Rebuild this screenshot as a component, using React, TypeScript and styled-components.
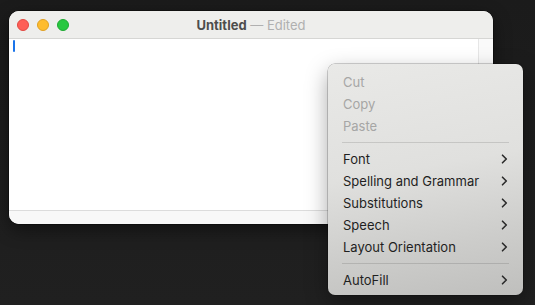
import React from 'react';
import styled, {createGlobalStyle} from 'styled-components';

const GlobalStyle = createGlobalStyle`
  html, body {
    margin: 0;
    padding: 0;
    background: #1d1d1d;
  }
  body {
    font-family: Inter, "Noto Sans", "Liberation Sans", sans-serif;
    -webkit-font-smoothing: antialiased;
  }
`;

type MenuEntry = { label: string, disabled?: boolean, submenu?: boolean } | 'sep'

const entries: MenuEntry[] = [
    {label: 'Cut', disabled: true},
    {label: 'Copy', disabled: true},
    {label: 'Paste', disabled: true},
    'sep',
    {label: 'Font', submenu: true},
    {label: 'Spelling and Grammar', submenu: true},
    {label: 'Substitutions', submenu: true},
    {label: 'Speech', submenu: true},
    {label: 'Layout Orientation', submenu: true},
    'sep',
    {label: 'AutoFill', submenu: true},
]

const Chevron = () => (
    <svg width="7" height="10" viewBox="0 0 7 10">
        <path d="M1.5 1.2 L5.3 5 L1.5 8.8" fill="none" stroke="#2a2a2a" strokeWidth="1.6"
              strokeLinecap="round" strokeLinejoin="round"/>
    </svg>
)

const App = () => {
    return (
        <Desktop>
            <GlobalStyle/>
            <Window>
                <TitleBar>
                    <Lights>
                        <Light color="#fe5f57" border="#e14942"/>
                        <Light color="#febc2e" border="#dfa023"/>
                        <Light color="#28c840" border="#1ea932"/>
                    </Lights>
                    <Title>
                        <b>Untitled</b> <Dim>— Edited</Dim>
                    </Title>
                </TitleBar>
                <Body>
                    <TextArea>
                        <Caret/>
                    </TextArea>
                    <ScrollTrack/>
                </Body>
                <BottomBar/>
            </Window>
            <Menu>
                {entries.map((e, i) => e === 'sep'
                    ? <Separator key={i}/>
                    : (
                        <Item key={i} disabled={e.disabled}>
                            <span>{e.label}</span>
                            {e.submenu && <Chevron/>}
                        </Item>
                    ))}
            </Menu>
        </Desktop>
    )
};

const Desktop = styled.div`
  position: relative;
  width: 535px;
  height: 305px;
  box-sizing: border-box;
  padding: 11px 0 0 9px;
  background: linear-gradient(180deg, #1b1b1b 0%, #1e1e1e 60%, #202020 100%);
  overflow: hidden;
`;

const Window = styled.div`
  width: 484px;
  height: 213px;
  display: flex;
  flex-direction: column;
  border-radius: 10px;
  overflow: hidden;
  background: #fff;
  box-shadow: 0 6px 18px rgba(0, 0, 0, 0.45), 0 0 0 0.5px rgba(0, 0, 0, 0.6);
`;

const TitleBar = styled.div`
  position: relative;
  height: 27px;
  flex: none;
  display: flex;
  align-items: center;
  justify-content: center;
  background: #eeeeec;
  border-bottom: 1px solid #d6d6d4;
`;

const Lights = styled.div`
  position: absolute;
  left: 8px;
  top: 8px;
  display: flex;
  gap: 8px;
`;

const Light = styled.span<{ color: string, border: string }>`
  width: 12px;
  height: 12px;
  border-radius: 50%;
  box-sizing: border-box;
  background: ${p => p.color};
  border: 0.5px solid ${p => p.border};
`;

const Title = styled.div`
  font-size: 13px;
  color: #4d4d4d;
  b {
    font-weight: 700;
  }
`;

const Dim = styled.span`
  color: #b0b0b0;
  font-weight: 400;
`;

const Body = styled.div`
  flex: 1;
  display: flex;
`;

const TextArea = styled.div`
  flex: 1;
  padding: 1px 0 0 4px;
`;

const Caret = styled.div`
  width: 2px;
  height: 12px;
  border-radius: 1px;
  background: #1a74ea;
`;

const ScrollTrack = styled.div`
  width: 14px;
  border-left: 1px solid #e6e6e6;
  background: #fafafa;
`;

const BottomBar = styled.div`
  height: 13px;
  flex: none;
  border-top: 1px solid #dcdcdc;
  background: #f8f8f8;
`;

const Menu = styled.div`
  position: absolute;
  left: 328px;
  top: 64px;
  width: 195px;
  box-sizing: border-box;
  padding: 7px 0 4px;
  border-radius: 7px;
  background: linear-gradient(170deg, #e9e9e7 0%, #e0e0de 45%, #cdcdcb 75%, #bfbfbd 100%);
  box-shadow: 0 0 0 0.5px rgba(0, 0, 0, 0.35), 0 8px 22px rgba(0, 0, 0, 0.35);
`;

const Item = styled.div<{ disabled?: boolean }>`
  height: 22px;
  display: flex;
  align-items: center;
  justify-content: space-between;
  padding: 0 15px 0 15px;
  font-size: 13px;
  color: ${p => p.disabled ? '#a6a6a5' : '#1f1f1f'};
`;

const Separator = styled.div`
  height: 1px;
  margin: 5px 14px;
  background: rgba(0, 0, 0, 0.12);
`;

export default App;
